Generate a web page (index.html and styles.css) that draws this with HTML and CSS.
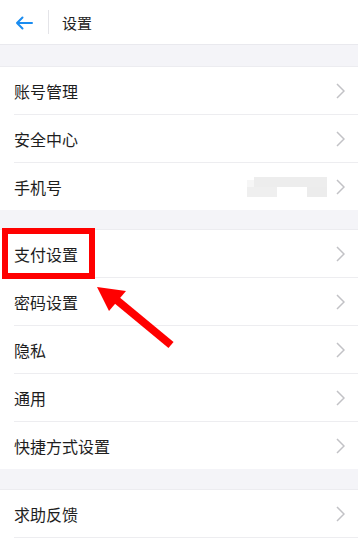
FILE: index.html
```html
<!DOCTYPE html>
<html lang="zh-CN">
<head>
<meta charset="utf-8">
<title>设置</title>
<link rel="stylesheet" href="styles.css">
</head>
<body>
<div class="page">
  <header class="topbar">
    <svg class="back" width="18" height="14" viewBox="0 0 18 14"><path d="M17 7H2M7.5 1.5L2 7l5.5 5.5" fill="none" stroke="#1a8cf0" stroke-width="2" stroke-linecap="round" stroke-linejoin="round"/></svg>
    <span class="vdiv"></span>
    <span class="title">设置</span>
  </header>
  <div class="band band-top"></div>
  <ul class="group">
    <li class="row"><span class="label">账号管理</span><svg class="chev" width="9" height="16" viewBox="0 0 9 16"><path d="M1 1l7 7-7 7" fill="none" stroke="#c2c2c6" stroke-width="1.5"/></svg></li>
    <li class="row"><span class="label">安全中心</span><svg class="chev" width="9" height="16" viewBox="0 0 9 16"><path d="M1 1l7 7-7 7" fill="none" stroke="#c2c2c6" stroke-width="1.5"/></svg></li>
    <li class="row last"><span class="label">手机号</span><span class="blur"><b class="b1"></b><b class="b2"></b><b class="b3"></b><b class="b4"></b></span><svg class="chev" width="9" height="16" viewBox="0 0 9 16"><path d="M1 1l7 7-7 7" fill="none" stroke="#c2c2c6" stroke-width="1.5"/></svg></li>
  </ul>
  <div class="band band-mid"></div>
  <ul class="group">
    <li class="row"><span class="label">支付设置</span><svg class="chev" width="9" height="16" viewBox="0 0 9 16"><path d="M1 1l7 7-7 7" fill="none" stroke="#c2c2c6" stroke-width="1.5"/></svg></li>
    <li class="row"><span class="label">密码设置</span><svg class="chev" width="9" height="16" viewBox="0 0 9 16"><path d="M1 1l7 7-7 7" fill="none" stroke="#c2c2c6" stroke-width="1.5"/></svg></li>
    <li class="row"><span class="label">隐私</span><svg class="chev" width="9" height="16" viewBox="0 0 9 16"><path d="M1 1l7 7-7 7" fill="none" stroke="#c2c2c6" stroke-width="1.5"/></svg></li>
    <li class="row"><span class="label">通用</span><svg class="chev" width="9" height="16" viewBox="0 0 9 16"><path d="M1 1l7 7-7 7" fill="none" stroke="#c2c2c6" stroke-width="1.5"/></svg></li>
    <li class="row last"><span class="label">快捷方式设置</span><svg class="chev" width="9" height="16" viewBox="0 0 9 16"><path d="M1 1l7 7-7 7" fill="none" stroke="#c2c2c6" stroke-width="1.5"/></svg></li>
  </ul>
  <div class="band band-bot"></div>
  <ul class="group">
    <li class="row"><span class="label">求助反馈</span><svg class="chev" width="9" height="16" viewBox="0 0 9 16"><path d="M1 1l7 7-7 7" fill="none" stroke="#c2c2c6" stroke-width="1.5"/></svg></li>
  </ul>
  <div class="highlight"></div>
  <svg class="arrow" width="80" height="62" viewBox="0 0 80 62"><path d="M74 58L16 10" stroke="#ff0000" stroke-width="8" fill="none"/><polygon points="0,0 29,4 12,24" fill="#ff0000"/></svg>
</div>
</body>
</html>
```
FILE: styles.css
```css
* { box-sizing: border-box; }
html, body { margin: 0; padding: 0; background: #fff; }
body { font-family: "Noto Sans CJK SC", "Noto Sans", sans-serif; color: #222; }
.page { position: relative; width: 358px; height: 539px; overflow: hidden; }
.topbar { height: 45px; display: flex; align-items: center; padding-left: 15px; border-bottom: 1px solid #e9e9ee; }
.back { display: block; margin-top: 1px; }
.vdiv { width: 1px; height: 24px; background: #e4e4e8; margin-left: 15px; }
.title { font-size: 15px; margin-left: 13px; color: #222; line-height: 1; }
.band { background: #f4f4f8; border-bottom: 1px solid #ececf0; }
.band-top { height: 22px; }
.band-mid { height: 20px; }
.band-bot { height: 21px; }
.group { list-style: none; margin: 0; padding: 0; }
.row { position: relative; height: 48px; display: flex; align-items: center; padding: 0 0 0 14px; font-size: 16px; color: #1e1e1e; }
.row::after { content: ""; position: absolute; left: 14px; right: 0; bottom: 0; height: 1px; background: #ededf0; }
.row.last { height: 47px; }
.row.last::after { display: none; }
.label { flex: 1; line-height: 1; }
.chev { display: block; margin-right: 13px; flex: none; }
.blur { position: relative; width: 80px; height: 20px; margin-right: 9px; flex: none; }
.blur b { position: absolute; }
.blur .b1 { left: 7px; top: 0; width: 73px; height: 10px; background: #ededed; }
.blur .b2 { left: 0; top: 10px; width: 30px; height: 10px; background: #efefef; }
.blur .b3 { left: 60px; top: 10px; width: 20px; height: 10px; background: #ececec; }
.blur .b4 { left: 0; top: 3px; width: 7px; height: 7px; background: #f6f6f6; }
.highlight { position: absolute; left: 2px; top: 228px; width: 93px; height: 51px; border: 6px solid #ff0000; }
.arrow { position: absolute; left: 97px; top: 287px; }
```
